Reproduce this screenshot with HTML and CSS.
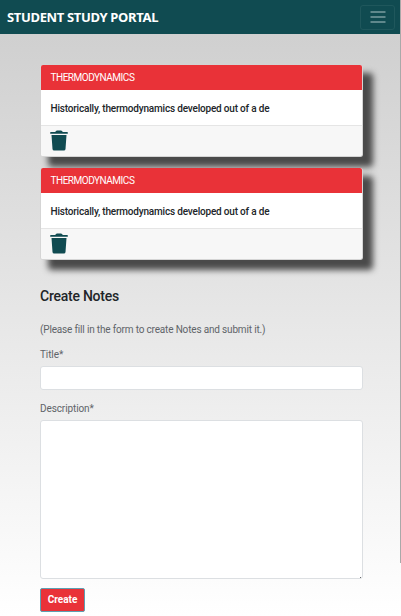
FILE: index.html
```html
<!DOCTYPE html>
<html lang="en">
<head>
<meta charset="utf-8">
<title>Student Study Portal</title>
<link rel="stylesheet" href="styles.css">
</head>
<body>
<nav class="navbar">
  <a class="brand">STUDENT STUDY PORTAL</a>
  <button class="toggler" aria-label="Menu"><svg width="16" height="14" viewBox="0 0 16 14"><path d="M.5 2h15M.5 7h15M.5 12h15" stroke="#799da0" stroke-width="1.5"/></svg></button>
</nav>
<main class="content">
  <article class="card">
    <h2 class="card-header">THERMODYNAMICS</h2>
    <p class="card-body">Historically, thermodynamics developed out of a de</p>
    <footer class="card-footer"><svg class="trash" width="18" height="21" viewBox="0 0 18 21"><path d="M.7 2H5.2L6 .9Q6.4.4 7 .4h4q.6 0 1 .5l.8 1.1h4.500q.5 0 .5.5v1.300H.2V2.500q0-.5.5-.5ZM1.500 5h15l-1 14q-.1 1.600-1.700 1.600H4.200q-1.600 0-1.700-1.600Z"/></svg></footer>
  </article>
  <article class="card">
    <h2 class="card-header">THERMODYNAMICS</h2>
    <p class="card-body">Historically, thermodynamics developed out of a de</p>
    <footer class="card-footer"><svg class="trash" width="18" height="21" viewBox="0 0 18 21"><path d="M.7 2H5.2L6 .9Q6.4.4 7 .4h4q.6 0 1 .5l.8 1.1h4.500q.5 0 .5.5v1.300H.2V2.500q0-.5.5-.5ZM1.500 5h15l-1 14q-.1 1.600-1.700 1.600H4.200q-1.600 0-1.700-1.600Z"/></svg></footer>
  </article>
  <form class="form">
    <h1 class="heading">Create Notes</h1>
    <p class="hint">(Please fill in the form to create Notes and submit it.)</p>
    <label class="label label-title" for="t">Title*</label>
    <input class="field input" id="t">
    <label class="label label-description" for="d">Description*</label>
    <textarea class="field area" id="d"></textarea>
    <button class="submit" type="button">Create</button>
  </form>
</main>
<div class="scroll-thumb"></div>
</body>
</html>
```
FILE: styles.css
```css
* { box-sizing: border-box; }
html { height: 100%; overflow: hidden; }
body {
  margin: 0;
  height: 616px;
  overflow: hidden;
  font-family: Roboto, "Liberation Sans", sans-serif;
  font-size: 10px;
  color: #212529;
  background: linear-gradient(#cdcdcd, #fff);
}
.navbar {
  height: 34px;
  padding: 0 6px 0 7px;
  display: flex;
  align-items: center;
  justify-content: space-between;
  background: #104b51;
}
.brand {
  font: 700 13px/20px "Noto Sans", "Open Sans", sans-serif;
  letter-spacing: -0.34px;
  color: #fff;
  white-space: nowrap;
}
.toggler {
  width: 35px;
  height: 25px;
  padding: 0;
  display: flex;
  align-items: center;
  justify-content: center;
  background: none;
  border: 1px solid #1f575c;
  border-radius: 3px;
}
.content { padding: 31px 38px 0 40px; }
.card {
  width: 323px;
  height: 92px;
  margin-bottom: 11px;
  border: 1px solid #d5d5d5;
  border-top: 0;
  border-radius: 3px;
  background: #fff;
  box-shadow: 9px 9px 6px 1px #4a4a4a;
}
.card-header {
  height: 25px;
  margin: 0;
  padding-left: 9.5px;
  border-radius: 2px 2px 0 0;
  background: #e93238;
  color: #fff;
  font-size: 10px;
  font-weight: 400;
  line-height: 25px;
  letter-spacing: -0.48px;
}
.card-body {
  height: 35px;
  margin: 0;
  padding-left: 9.5px;
  font-size: 10px;
  font-weight: 500;
  line-height: 37px;
  letter-spacing: -0.19px;
  white-space: nowrap;
}
.card-footer {
  height: 31px;
  padding: 4px 9px;
  border-top: 1px solid #e5e5e5;
  border-radius: 0 0 2px 2px;
  background: #f7f7f7;
}
.trash { display: block; fill: #104b51; }
.form { display: flex; flex-direction: column; align-items: flex-start; padding-top: 15px; }
.heading { margin: 0; font-size: 14px; font-weight: 500; line-height: 20px; letter-spacing: -0.25px; white-space: nowrap; }
.hint { margin: 16px 0 0; color: #606468; line-height: 16px; letter-spacing: -0.17px; white-space: nowrap; }
.label { color: #606468; line-height: 16px; letter-spacing: -0.1px; }
.label-title { margin-top: 9px; }
.label-description { margin-top: 11px; }
.field {
  width: 323px;
  margin: 3px 0 0;
  border: 1px solid #dcdfe2;
  border-radius: 3px;
  background: #fff;
  outline: 0;
}
.input { height: 24px; }
.area { height: 159px; resize: none; background: linear-gradient(#555, #555) right 1px bottom 0 / 1px 1px no-repeat #fff; }
.submit {
  width: 45px;
  height: 24px;
  margin-top: 9px;
  padding: 0;
  border: 1px solid #5e9fb2;
  border-radius: 2px;
  background: #e93238;
  color: #fff;
  font: 700 10px/20px Roboto, sans-serif;
}
.scroll-thumb {
  position: absolute;
  top: 0;
  right: 0;
  width: 1px;
  height: 563px;
  background: #a9a9a9;
}
```
